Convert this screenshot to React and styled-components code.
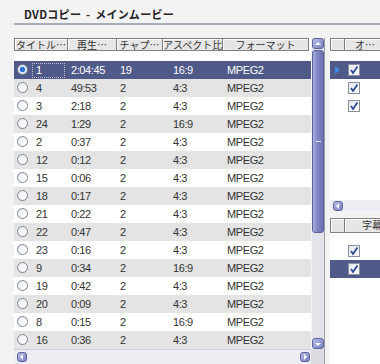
import React from "react"
import styled, { createGlobalStyle } from "styled-components"

const GlobalStyle = createGlobalStyle`
  body {
    margin: 0;
    background: #f3f3f4;
    overflow: hidden;
    font-family: "Liberation Sans", "Noto Sans CJK JP", sans-serif;
  }
`

const columns = [
  { label: "タイトル…", width: 54, pad: 22 },
  { label: "再生…", width: 49, pad: 3 },
  { label: "チャプ…", width: 46, pad: 3 },
  { label: "アスペクト比", width: 60, pad: 10 },
  { label: "フォーマット", width: 86, pad: 4 },
]

const titles = [
  ["1", "2:04:45", "19", "16:9"],
  ["4", "49:53", "2", "4:3"],
  ["3", "2:18", "2", "4:3"],
  ["24", "1:29", "2", "16:9"],
  ["2", "0:37", "2", "4:3"],
  ["12", "0:12", "2", "4:3"],
  ["15", "0:06", "2", "4:3"],
  ["18", "0:17", "2", "4:3"],
  ["21", "0:22", "2", "4:3"],
  ["22", "0:47", "2", "4:3"],
  ["23", "0:16", "2", "4:3"],
  ["9", "0:34", "2", "16:9"],
  ["19", "0:42", "2", "4:3"],
  ["20", "0:09", "2", "4:3"],
  ["8", "0:15", "2", "16:9"],
  ["16", "0:36", "2", "4:3"],
]

const Page = styled.div`
  width: 380px;
  height: 364px;
  overflow: hidden;
`

const TitleBar = styled.div`
  box-sizing: border-box;
  margin-left: 14px;
  height: 25px;
  padding: 8px 0 0 10px;
  border-bottom: 2px solid #a5aebb;
  font-family: "Noto Sans CJK JP", sans-serif;
  font-weight: 700;
  font-size: 11px;
  line-height: 13px;
  letter-spacing: 0.3px;
  word-spacing: 2px;
  color: #222;
`

const Content = styled.div`
  display: flex;
  gap: 5px;
  margin: 13px 0 0 14px;
`

const LeftGrid = styled.div`
  display: grid;
  grid-template-columns: 297px 13px;
  grid-template-rows: 311px 15px;
  width: 311px;
  border-right: 1px solid #9c9ca6;
  background: #fff;
`

const Table = styled.div`
  display: flex;
  flex-direction: column;
  background: #fff;
`

const HeaderRow = styled.div`
  display: flex;
  height: 13px;
  flex: none;
`

const HeaderCell = styled.div`
  box-sizing: border-box;
  width: ${(p) => p.$w}px;
  flex: none;
  border: 1px solid #808080;
  border-left: ${(p) => (p.$first ? "1px solid #808080" : "none")};
  box-shadow: inset 1px 1px 0 #fff;
  background: #e6e6e6;
  font-family: "Noto Sans CJK JP", sans-serif;
  font-size: 10px;
  line-height: 11px;
  color: #333;
  text-align: ${(p) => (p.$left ? "left" : "center")};
  padding-left: ${(p) => p.$pad || 0}px;
  white-space: nowrap;
  overflow: hidden;
`

const Rows = styled.div`
  margin-top: 10px;
`

const Row = styled.div`
  display: flex;
  align-items: center;
  height: 18px;
  background: ${(p) => (p.$selected ? "#4f5a88" : p.$alt ? "#e4e4e4" : "#fff")};
  color: ${(p) => (p.$selected ? "#fff" : "#333")};
  font-size: 11px;
  letter-spacing: -0.4px;
`

const Cell = styled.div`
  position: relative;
  box-sizing: border-box;
  width: ${(p) => p.$w}px;
  flex: none;
  padding-left: ${(p) => p.$pad}px;
  white-space: nowrap;
  line-height: 18px;
`

const Radio = styled.span`
  position: absolute;
  left: 3px;
  top: 3px;
  box-sizing: border-box;
  width: 11px;
  height: 11px;
  border-radius: 50%;
  border: 1px solid #7d8595;
  background: ${(p) =>
    p.$on
      ? "radial-gradient(circle, #2f74d6 0 2.5px, #dfe7f3 3px)"
      : "linear-gradient(135deg, #e9ecf0, #fff)"};
`

const FocusBox = styled.span`
  position: absolute;
  left: 18px;
  right: 3px;
  top: 2px;
  bottom: 1px;
  border: 1px dotted #b8bed6;
`

const VScroll = styled.div`
  display: flex;
  flex-direction: column;
  align-items: center;
  background: #e3e3ea;
  border-left: 1px solid #f4f4f6;
`

const ScrollBtn = styled.div`
  box-sizing: border-box;
  display: flex;
  align-items: center;
  justify-content: center;
  width: ${(p) => p.$w || 11}px;
  height: ${(p) => p.$h || 11}px;
  flex: none;
  border: 1px solid #5b629c;
  border-radius: 3px;
  background: linear-gradient(135deg, #b7bbe6, #7a81bf);
`

const Thumb = styled.div`
  box-sizing: border-box;
  width: 12px;
  height: 183px;
  margin-top: 1px;
  display: flex;
  align-items: center;
  justify-content: center;
  border: 1px solid #5b629c;
  border-radius: 3px;
  background: linear-gradient(to right, #a9aedd, #7f86c3 45%, #6d74b4);
`

const Grip = styled.span`
  width: 5px;
  height: 1px;
  background: #e4e6f6;
`

const Track = styled.div`
  flex: 1;
`

const HScroll = styled.div`
  display: flex;
  align-items: center;
  justify-content: space-between;
  padding: 0 1px 0 3px;
  background: #ececf2;
  border-top: 1px solid #d0d0d8;
`

const Corner = styled.div`
  background: #dcdce2;
`

const RightCol = styled.div`
  display: flex;
  flex-direction: column;
  gap: 7px;
  width: 60px;
`

const Panel = styled.div`
  display: flex;
  flex-direction: column;
  height: ${(p) => p.$h}px;
  background: #fff;
`

const PanelHeader = styled.div`
  display: flex;
  height: ${(p) => p.$h}px;
  flex: none;
`

const PanelRows = styled.div`
  flex: 1;
  margin-top: ${(p) => p.$gap}px;
`

const PanelRow = styled.div`
  display: flex;
  align-items: center;
  height: 18px;
  background: ${(p) => (p.$selected ? "#4f5a88" : "#fff")};
`

const Indicator = styled.div`
  width: 15px;
  flex: none;
  display: flex;
  align-items: center;
  justify-content: center;
`

const Check = styled.div`
  box-sizing: border-box;
  width: 12px;
  height: 12px;
  margin-left: 3px;
  border: 1px solid #8a8f9e;
  background: linear-gradient(135deg, #e4e7ee, #fff);
  display: flex;
  align-items: center;
  justify-content: center;
`

const PanelScroll = styled.div`
  display: flex;
  align-items: center;
  height: 11px;
  padding-left: 3px;
  background: #ececf2;
`

const Arrow = ({ dir }) => {
  const pts = {
    up: "1,5 4,2 7,5",
    down: "1,3 4,6 7,3",
    left: "5,1 2,4 5,7",
    right: "3,1 6,4 3,7",
  }[dir]
  return (
    <svg width="8" height="8" viewBox="0 0 8 8">
      <polygon points={pts} fill="#fff" />
    </svg>
  )
}

const CheckMark = () => (
  <svg width="10" height="10" viewBox="0 0 10 10">
    <path d="M2 5 L4 8 L8.5 1.5" fill="none" stroke="#2c4a96" strokeWidth="1.8" />
  </svg>
)

const RowPointer = () => (
  <svg width="6" height="8" viewBox="0 0 6 8">
    <polygon points="0,0 5,4 0,8" fill="#3a8ce6" />
  </svg>
)

const ChecklistPanel = ({ height, headerHeight, gap, label, labelPad, rows, scroll }) => (
  <Panel $h={height}>
    <PanelHeader $h={headerHeight}>
      <HeaderCell $w={15} $first />
      <HeaderCell $w={50} $left $pad={labelPad}>
        {label}
      </HeaderCell>
    </PanelHeader>
    <PanelRows $gap={gap}>
      {rows.map((r, i) => (
        <PanelRow key={i} $selected={r.selected}>
          <Indicator>{r.pointer && <RowPointer />}</Indicator>
          <Check>
            <CheckMark />
          </Check>
        </PanelRow>
      ))}
    </PanelRows>
    {scroll && (
      <PanelScroll>
        <ScrollBtn $w={10} $h={10}>
          <Arrow dir="left" />
        </ScrollBtn>
      </PanelScroll>
    )}
  </Panel>
)

export default function App() {
  return (
    <Page>
      <GlobalStyle />
      <TitleBar>DVDコピー - メインムービー</TitleBar>
      <Content>
        <LeftGrid>
          <Table>
            <HeaderRow>
              {columns.map((c, i) => (
                <HeaderCell key={c.label} $w={c.width} $first={i === 0}>
                  {c.label}
                </HeaderCell>
              ))}
            </HeaderRow>
            <Rows>
              {titles.map((t, i) => (
                <Row key={t[0]} $selected={i === 0} $alt={i % 2 === 1}>
                  {[...t, "MPEG2"].map((v, j) => (
                    <Cell key={j} $w={columns[j].width} $pad={columns[j].pad}>
                      {j === 0 && <Radio $on={i === 0} />}
                      {j === 0 && i === 0 && <FocusBox />}
                      {v}
                    </Cell>
                  ))}
                </Row>
              ))}
            </Rows>
          </Table>
          <VScroll>
            <ScrollBtn $w={12} $h={11}>
              <Arrow dir="up" />
            </ScrollBtn>
            <Thumb>
              <Grip />
            </Thumb>
            <Track />
            <ScrollBtn $w={12} $h={11}>
              <Arrow dir="down" />
            </ScrollBtn>
          </VScroll>
          <HScroll>
            <ScrollBtn $w={10} $h={10}>
              <Arrow dir="left" />
            </ScrollBtn>
            <ScrollBtn $w={10} $h={10}>
              <Arrow dir="right" />
            </ScrollBtn>
          </HScroll>
          <Corner />
        </LeftGrid>
        <RightCol>
          <ChecklistPanel
            height={173}
            headerHeight={13}
            gap={10}
            label="オ…"
            labelPad={10}
            rows={[{ pointer: true, selected: true }, {}, {}]}
            scroll
          />
          <ChecklistPanel
            height={160}
            headerHeight={15}
            gap={9}
            label="字幕"
            labelPad={17}
            rows={[{}, { selected: true }]}
          />
        </RightCol>
      </Content>
    </Page>
  )
}
